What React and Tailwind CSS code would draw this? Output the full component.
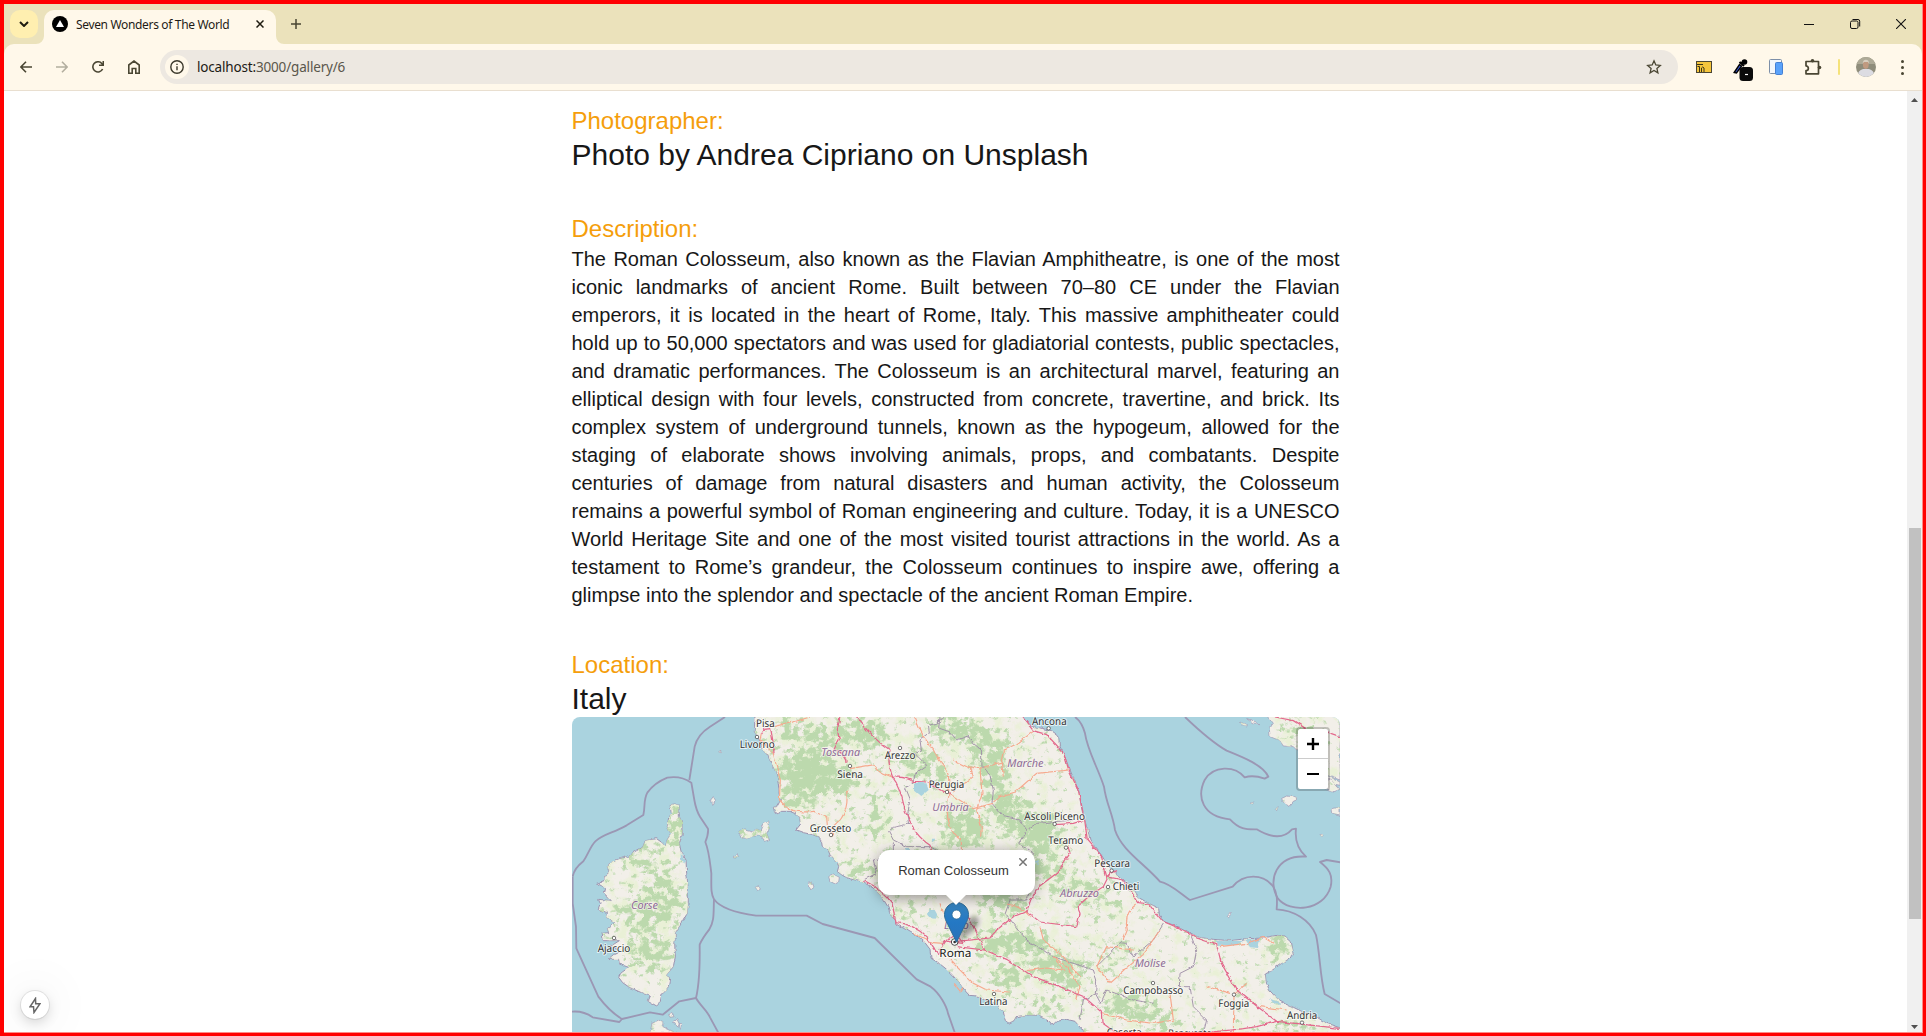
import React from "react";

const MAINLAND =
  "M585 45 L583 95 597 118 605 140 625 170 634 190 645 210 652 232 655 250 657 280 662 300 652 318 640 322 644 338 654 345 660 334 690 334 708 342 719 356 722 372 708 390 730 398 750 402 775 412 785 425 787 438 805 452 812 470 832 486 836 500 832 515 850 528 872 537 905 544 940 564 965 590 985 622 990 645 1005 655 1008 672 1040 690 1080 714 1095 728 1110 748 1113 775 1135 788 1160 808 1180 828 1202 852 1215 872 1228 886 1250 888 1285 903 1312 918 1330 935 1336 962 1346 970 1362 962 1368 950 1400 945 1432 946 1460 960 1482 974 1492 964 1520 958 1545 964 1562 984 1572 1000 2345 1000 2345 985 2300 970 2265 948 2225 934 2180 912 2150 895 2128 870 2118 845 2116 822 2135 812 2165 790 2190 775 2200 758 2194 725 2175 708 2150 706 2110 714 2060 716 2010 722 1960 718 1915 712 1890 698 1865 684 1812 665 1798 645 1796 624 1770 612 1738 594 1722 570 1700 548 1672 524 1655 508 1640 490 1622 462 1604 440 1590 420 1582 385 1570 350 1562 310 1558 280 1545 245 1528 205 1512 165 1498 135 1496 108 1475 92 1440 84 1410 78 1382 45 Z";
const CORSICA =
  "M330 314 L345 312 357 316 358 350 366 368 367 400 358 430 364 458 378 480 380 520 384 560 385 600 382 640 364 670 346 698 344 730 346 770 340 800 318 826 332 836 328 858 306 880 300 908 290 918 262 902 268 888 240 876 208 862 188 848 176 832 182 820 206 802 178 792 176 778 144 778 160 764 178 756 172 744 150 740 178 722 130 722 126 700 146 698 142 686 164 668 140 650 142 638 114 628 120 612 116 598 154 602 130 578 134 562 110 550 132 542 132 528 148 520 142 500 158 484 178 476 200 470 222 456 248 442 256 422 290 416 306 428 316 440 324 412 332 400 322 380 326 352 334 340 Z";
const ISLANDS = [
  "M536 395 L548 386 565 390 580 394 590 384 604 390 612 370 626 366 628 386 620 400 628 420 614 424 604 408 582 408 560 416 544 412 Z",
  "M452 300 L460 290 466 300 460 312 454 312 Z",
  "M806 530 L820 522 838 532 836 546 826 552 810 544 Z",
  "M745 548 L756 544 762 562 752 570 Z",
  "M520 470 L530 458 536 472 Z",
  "M586 562 L594 558 598 568 590 572 Z",
  "M276 970 L296 960 312 968 308 980 330 990 350 1000 270 1000 Z",
  "M338 966 L350 956 358 972 350 984 Z",
  "M326 944 L338 940 342 950 330 952 Z",
  "M358 970 L368 972 362 990 Z",
  "M476 156 L482 150 482 158 Z",
  "M2122 45 L2140 70 2128 85 2130 110 2160 122 2170 138 2200 140 2230 170 2260 210 2340 240 2340 45 Z",
  "M2060 56 L2080 62 2096 74 2082 72 Z",
  "M2042 66 L2058 72 2062 78 2046 74 Z",
  "M2164 296 L2180 288 2198 290 2214 298 2200 304 2190 316 2176 310 Z",
  "M2146 328 L2154 320 2150 332 Z",
  "M2070 310 L2082 306 2078 312 Z",
  "M2268 216 L2300 226 2340 246 2340 256 2300 248 2270 224 Z",
  "M2280 250 L2310 236 2340 268 2320 276 2290 266 Z",
  "M2316 326 L2340 322 2340 346 2318 340 Z",
  "M2280 404 L2292 402 2286 410 Z",
  "M2002 646 L2012 636 2016 640 2006 650 Z",
];
const BORDERS = [
  "M495 51 L450 80 Q412 104 404 140 Q398 178 388 240",
  "M38 530 Q42 506 70 484 C84 464 90 440 106 424 C130 402 158 400 200 376 L250 345 C256 320 250 300 262 278 Q284 248 322 233 Q362 226 394 248 L403 300 Q408 330 420 350 L444 386 Q446 402 436 426 C448 456 450 490 454 520 C454 560 452 580 462 598 C478 620 520 638 588 647 L740 647 788 672 944 714 1070 838 1112 860 C1140 880 1160 920 1164 940 L1185 1000",
  "M462 598 C460 640 464 660 448 688 Q426 716 419 734 C420 800 416 860 408 894",
  "M38 530 V610 L48 680 49 745 115 890 Q150 936 186 957 L270 937 308 944 358 904 408 894 C420 916 440 930 450 952 L476 1000",
  "M36 935 Q70 932 98 952 L178 966 186 957",
  "M1545 51 Q1566 66 1575 100 C1582 150 1612 200 1632 260 C1638 310 1658 340 1665 390 C1684 450 1752 490 1800 545 C1830 550 1860 580 1890 600 L2018 560 C2050 520 2110 520 2140 560 C2152 580 2152 600 2150 628 C2200 630 2250 660 2268 705 C2280 760 2280 830 2294 882 L2342 910",
  "M1875 51 C1920 94 1962 130 2000 152 C2050 172 2110 196 2125 230 L2114 236 Q2080 224 2054 232 C2024 196 1960 196 1934 240 C1910 290 1926 350 2010 358 C2040 390 2060 388 2090 388 C2130 412 2170 418 2196 388 L2208 386 C2204 420 2216 450 2238 470 C2150 464 2120 540 2154 596 C2190 640 2290 634 2312 560 C2320 524 2306 506 2280 486 L2300 480 2342 487",
];
const FORESTS = [
  [700, 90, 55, 40, 0.6], [740, 215, 85, 60, 0.9], [720, 300, 60, 34, 0.7], [835, 240, 60, 50, 0.7], [900, 90, 80, 35, 0.75],
  [800, 120, 60, 50, 0.6], [935, 110, 50, 50, 0.6], [940, 375, 40, 40, 0.6], [1080, 190, 60, 50, 0.6], [960, 300, 50, 40, 0.3],
  [1190, 90, 90, 40, 0.7], [1290, 165, 60, 75, 0.7], [1130, 220, 60, 30, 0.5], [1215, 385, 70, 50, 0.8], [1310, 270, 40, 80, 0.6],
  [1360, 345, 60, 60, 0.75], [1440, 400, 60, 60, 0.9], [1200, 480, 150, 60, 0.3], [1330, 600, 70, 50, 0.65], [1360, 730, 120, 35, 0.85],
  [1490, 800, 90, 40, 0.7], [1530, 560, 80, 45, 0.45], [1460, 500, 60, 40, 0.6], [1620, 600, 70, 50, 0.35], [1660, 760, 70, 60, 0.3],
  [1700, 920, 80, 40, 0.7], [1800, 960, 60, 30, 0.6], [2150, 742, 38, 26, 1], [2200, 985, 70, 16, 0.8], [1340, 830, 60, 35, 0.7],
  [1530, 850, 40, 30, 0.7], [900, 510, 50, 26, 0.6], [1160, 700, 50, 30, 0.3], [1040, 640, 60, 40, 0.3], [1450, 920, 60, 25, 0.6],
  [260, 480, 70, 50, 0.45], [310, 600, 60, 80, 0.6], [230, 640, 80, 60, 0.5], [270, 760, 70, 60, 0.6], [350, 380, 30, 70, 0.6],
  [585, 395, 50, 25, 0.5], [2230, 100, 70, 50, 0.35], [620, 130, 30, 40, 0.4],
];
const MOTORWAYS = [
  "M890 51 C915 80 930 110 990 150 C982 180 990 210 998 232 C1024 262 1030 310 1036 336 C1060 380 1060 400 1110 436 L1116 456",
  "M998 232 Q1030 228 1060 244 L1100 246 1125 262 1175 282",
  "M840 51 L832 90 838 118 822 148 Q860 160 858 190",
  "M604 100 L612 88 632 86 640 130 642 160",
  "M910 540 Q970 570 996 610 L1008 668 Q1060 670 1100 712 L1136 764",
  "M1136 764 Q1150 720 1186 700 L1210 730 1160 724",
  "M1190 724 L1290 714 1310 690 1360 650 1400 634 1440 666 1550 680 1560 640 1552 620 1590 586 1630 560 1650 520 1668 512",
  "M1190 600 L1230 660 1274 750 1190 740",
  "M1274 750 L1340 778 1420 830 1500 860 1572 890 1624 936 1626 968 1670 1000",
  "M1382 45 L1420 92 1460 104 1512 160 1526 210 1555 270 1574 360 1582 420 1624 468 1640 530 1690 540 1736 608 1766 612 1808 664 1870 690 1910 714 1970 734 1984 790 2030 870 2090 918 2150 964 2340 985",
  "M2150 964 L2090 980 2050 986 1920 1000",
  "M1400 634 L1412 600 1436 560 1490 520 1530 460 1524 440",
  "M1488 374 L1540 370 1574 360",
  "M2145 51 L2200 62 2260 100 2300 96 2340 110",
];
const TRUNKS = [
  "M640 80 L700 66 750 51", "M604 100 L600 120 640 160 650 200 661 240 658 300 680 322",
  "M680 322 Q700 340 760 334 L800 352 802 372", "M812 410 L820 400 808 390 Q870 350 860 272",
  "M870 206 L940 194 960 216 998 232", "M1064 51 Q1090 120 1120 146 C1140 200 1170 200 1166 250 L1166 290 C1150 360 1180 410 1204 420 V450",
  "M1166 280 L1240 326 1300 310 1320 290 1366 276 1430 220 1526 210", "M1180 276 L1240 230 1230 200 1256 206 1324 186 1330 150 1370 132 1420 94",
  "M1180 180 L1240 210 M1260 206 L1266 280 1250 330 1264 380 1262 410", "M1324 186 L1330 230",
  "M1340 612 C1400 620 1420 670 1400 634 M1730 612 Q1690 640 1702 690 L1690 720",
  "M1170 780 L1240 850 1280 870 1346 876 M1400 812 L1460 804 1510 810 1480 770 1520 800 1560 860 1550 900",
  "M1440 680 L1450 720 1510 770 1560 830", "M1624 940 L1700 960 1780 970 1840 960 1830 880",
  "M2022 884 L2060 850 M2022 884 L2020 1000 M1940 860 L2010 880", "M1800 690 L1750 760 1650 850 1610 800 1640 740 1720 750",
  "M1060 700 L1120 728 1150 730 M1140 610 L1150 640", "M1180 850 L1200 876 1210 860",
  "M1980 740 L2060 730 2110 712 2140 730 M2100 920 L2180 930",
];
const REGIONS = [
  "M1150 51 L1130 70 1105 76 1108 100 1080 120 1084 150 1064 160 1100 196 1066 220 1060 246 1036 262 1050 296 1042 350 1046 372 1000 382 986 394 1000 420 1040 440 1110 440 1140 456",
  "M1140 51 L1136 84 1170 96 1190 120 1224 108 1240 130 1264 150 1266 196 1290 226 1300 270 1296 310 1330 350 1380 360 1400 390 1430 370 1540 360",
  "M1000 430 L1000 450 960 476 940 480 950 520 910 540",
  "M1400 390 L1376 430 1420 460 1400 540 1410 570 1400 600 1350 600 1336 640 1360 670 1400 720 1480 770 1600 810 1610 840 1606 880 1622 910 1640 870 1720 900 1780 910",
  "M1810 672 L1780 720 1720 770 1700 730 1680 728 1650 760 1610 800",
  "M1890 700 L1910 750 1900 800 1860 820 1858 860 1890 860 1900 920 1940 960 1930 1000",
  "M1610 880 L1570 900 1560 960",
];
const LAKES = [
  "M1062 248 L1098 250 1106 270 1084 288 1062 270 Z", "M1106 630 L1124 630 1132 644 1124 656 1108 654 1102 640 Z",
  "M1968 724 L2050 722 2030 734 1974 738 Z", "M2056 720 L2100 716 2094 744 2070 742 Z",
  "M1030 448 L1050 446 1050 458 Z", "M1115 416 L1126 416 1118 430 Z", "M1420 486 L1436 480 1436 496 Z", "M2130 896 L2170 912 2140 910 Z",
  "M362 460 L378 484 372 490 362 476 Z",
];
const CITIES = [
  ["Pisa", 588, 81, 56, 0, 0], ["Livorno", 539, 144, 105, 591, 111], ["Siena", 832, 233, 77, 870, 198], ["Arezzo", 974, 176, 92, 1020, 144],
  ["Perugia", 1106, 263, 107, 1161, 276], ["Grosseto", 749, 395, 125, 813, 405], ["Ajaccio", 113, 755, 98, 162, 714],
  ["Ancona", 1416, 74, 104, 1466, 85], ["Ascoli Piceno", 1393, 359, 182, 1484, 372], ["Teramo", 1465, 431, 105, 1518, 443],
  ["Pescara", 1603, 502, 107, 1655, 512], ["Chieti", 1658, 571, 80, 1644, 561], ["Latina", 1258, 915, 84, 1302, 882],
  ["Campobasso", 1690, 883, 180, 1779, 849], ["Foggia", 1975, 920, 93, 2022, 884], ["Andria", 2181, 957, 91, 2226, 968],
  ["Caserta", 1640, 1007, 105, 0, 0], ["Benevento", 1825, 1010, 130, 0, 0],
];
const REGION_NAMES = [
  ["Toscana", 784, 167, 116], ["Corse", 213, 628, 81], ["Umbria", 1117, 332, 109], ["Marche", 1342, 202, 108],
  ["Abruzzo", 1500, 591, 117], ["Molise", 1724, 801, 93], ["Lazio", 1152, 688, 74],
];

function ItalyMap() {
  return (
    <svg viewBox="36 51 2304 945" className="block h-[315px] w-[768px]" fontFamily='"Noto Sans", sans-serif' textRendering="geometricPrecision">
      <defs>
        <clipPath id="land">
          <path d={MAINLAND} />
          <path d={CORSICA} />
          {ISLANDS.map((d) => <path key={d} d={d} />)}
        </clipPath>
        <filter id="woods" filterUnits="userSpaceOnUse" x="36" y="45" width="2304" height="960" colorInterpolationFilters="sRGB">
          <feGaussianBlur in="SourceGraphic" stdDeviation="16" result="density" />
          <feTurbulence type="fractalNoise" baseFrequency="0.045 0.05" numOctaves="4" seed="7" result="noise" />
          <feComposite in="density" in2="noise" operator="arithmetic" k2="0.46" k3="1" result="sum" />
          <feComponentTransfer in="sum" result="cut">
            <feFuncA type="linear" slope="6.5" intercept="-4.2" />
          </feComponentTransfer>
          <feFlood floodColor="#bcd9ad" />
          <feComposite operator="in" in2="cut" />
        </filter>
        <filter id="meadow" filterUnits="userSpaceOnUse" x="36" y="45" width="2304" height="960" colorInterpolationFilters="sRGB">
          <feGaussianBlur in="SourceGraphic" stdDeviation="34" result="density" />
          <feTurbulence type="fractalNoise" baseFrequency="0.03" numOctaves="5" seed="23" result="noise" />
          <feComposite in="density" in2="noise" operator="arithmetic" k2="0.4" k3="1" result="sum" />
          <feComponentTransfer in="sum" result="cut">
            <feFuncA type="linear" slope="4" intercept="-2.1" />
          </feComponentTransfer>
          <feFlood floodColor="#e9f0d6" />
          <feComposite operator="in" in2="cut" />
        </filter>
        <filter id="rough" filterUnits="userSpaceOnUse" x="0" y="0" width="2400" height="1050">
          <feTurbulence type="fractalNoise" baseFrequency="0.05" numOctaves="3" seed="4" />
          <feDisplacementMap in="SourceGraphic" scale="11" xChannelSelector="R" yChannelSelector="G" />
        </filter>
      </defs>
      <rect x="36" y="51" width="2304" height="950" fill="#aad3df" />
      <g filter="url(#rough)">
        <g fill="#f2efe9" stroke="#9c93b0" strokeWidth="3">
          <path d={MAINLAND} />
          <path d={CORSICA} />
          {ISLANDS.map((d) => <path key={d} d={d} strokeWidth="2" />)}
        </g>
        <g clipPath="url(#land)">
          {["url(#meadow)", "url(#woods)"].map((f) => (
            <g key={f} filter={f}>
              {FORESTS.map(([x, y, rx, ry, o]) => (
                <ellipse key={x + "-" + y} cx={x} cy={y} rx={rx} ry={ry} fillOpacity={o} />
              ))}
            </g>
          ))}
        </g>
        <g fill="#aad3df">{LAKES.map((d) => <path key={d} d={d} />)}</g>
        <g fill="none" stroke="#9f8fa8" strokeWidth="2.8">{REGIONS.map((d) => <path key={d} d={d} />)}</g>
        <g fill="none" stroke="#f6a88d" strokeWidth="3.4">{TRUNKS.map((d) => <path key={d} d={d} />)}</g>
        <g fill="none" stroke="#e3688c" strokeWidth="3.7">{MOTORWAYS.map((d) => <path key={d} d={d} />)}</g>
      </g>
      <g fill="none" stroke="#9b97b4" strokeWidth="5.5" strokeLinejoin="round">{BORDERS.map((d) => <path key={d} d={d} />)}</g>
      <g fill="#8d6b96" stroke="#f7f4ee" strokeWidth="5" strokeOpacity="0.75" paintOrder="stroke" fontSize="33" fontStyle="italic">
        {REGION_NAMES.map(([n, x, y, w]) => <text key={n} x={x} y={y} textLength={w} lengthAdjust="spacingAndGlyphs">{n}</text>)}
      </g>
      {CITIES.map(([n, x, y, w, cx, cy]) => (
        <g key={n}>
          {cx > 0 && <circle cx={cx} cy={cy} r="5.2" fill="#fff" stroke="#444" strokeWidth="2.2" />}
          <text x={x} y={y} textLength={w} lengthAdjust="spacingAndGlyphs" fontSize="32" fill="#333" stroke="#fff" strokeWidth="6" strokeOpacity="0.7" strokeLinejoin="round" paintOrder="stroke">{n}</text>
        </g>
      ))}
      <circle cx="1184" cy="726" r="10" fill="#fff" stroke="#333" strokeWidth="2.6" />
      <circle cx="1184" cy="726" r="4" fill="#333" />
      <text x="1138" y="771" textLength="96" lengthAdjust="spacingAndGlyphs" fontSize="34" fill="#222" stroke="#fff" strokeWidth="6" strokeOpacity="0.7" paintOrder="stroke">Roma</text>
    </svg>
  );
}

function Marker() {
  return (
    <svg viewBox="0 0 25 41" className="absolute left-[372px] top-[185px] h-[41px] w-[25px] overflow-visible">
      <defs>
        <linearGradient id="pin" x1="0" y1="0" x2="0" y2="1">
          <stop offset="0" stopColor="#3784bd" />
          <stop offset="0.5" stopColor="#2478c4" />
          <stop offset="1" stopColor="#2a72b8" />
        </linearGradient>
        <filter id="soft" x="-50%" y="-50%" width="200%" height="200%"><feGaussianBlur stdDeviation="2.4" /></filter>
      </defs>
      <path d="M13 40 L20 20 Q34 8 35 20 Q34 28 13 40Z" fill="#000" opacity="0.35" filter="url(#soft)" />
      <path d="M12.5 .5 C5.8 .5 .5 5.8 .5 12.6 C.5 16.4 2 19 3.8 22.4 L12.5 40.2 L21.2 22.4 C23 19 24.5 16.4 24.5 12.6 C24.5 5.8 19.2 .5 12.5 .5Z" fill="url(#pin)" stroke="#2e6c97" strokeWidth="1" />
      <circle cx="12.5" cy="12.6" r="4.5" fill="#fff" stroke="#2e6c97" strokeWidth="0.8" />
    </svg>
  );
}

function TabStrip() {
  return (
    <div className="flex h-10 shrink-0 items-end bg-[#ebe2bb]">
      <div className="mb-1.5 ml-1.5 flex size-7 items-center justify-center rounded-[10px] bg-[#ffefb0]">
        <svg viewBox="0 0 10 6" className="h-1.5 w-2.5" fill="none" stroke="#1e1b10" strokeWidth="2"><path d="M1 1l4 4 4-4" /></svg>
      </div>
      <svg viewBox="0 0 8 8" className="-ml-0.5 size-2"><path d="M8 0v8H0a8 8 0 008-8z" fill="#fff8ea" /></svg>
      <div className="flex h-[34px] w-[232px] items-center rounded-t-[10px] bg-[#fff8ea] pb-1.5 pl-2">
        <svg viewBox="0 0 16 16" className="size-4"><circle cx="8" cy="8" r="8" fill="#000" /><path d="M8 4l4 7H4z" fill="#fff" /></svg>
        <span className="ml-2 w-[154px] whitespace-nowrap pt-px font-['Noto_Sans',sans-serif] text-[12px] tracking-[-0.34px] text-[#1e1b16]">Seven Wonders of The World</span>
        <svg viewBox="0 0 8 8" className="ml-[26px] size-2" stroke="#1e1b10" strokeWidth="1.5"><path d="M.5 .5l7 7M7.5 .5l-7 7" /></svg>
      </div>
      <svg viewBox="0 0 8 8" className="size-2"><path d="M0 0v8h8a8 8 0 01-8-8z" fill="#fff8ea" /></svg>
      <svg viewBox="0 0 10 10" className="mb-[15px] ml-[7px] size-2.5" stroke="#4a4633" strokeWidth="1.5"><path d="M5 0v10M0 5h10" /></svg>
      <div className="mb-[15px] ml-auto mr-[16px] flex h-2.5 items-center gap-[36px]">
        <svg viewBox="0 0 10 10" className="size-2.5" stroke="#111" strokeWidth="1"><path d="M0 5.5h10" /></svg>
        <svg viewBox="0 0 10 10" className="size-2.5 overflow-visible" stroke="#111" strokeWidth="1" fill="none"><rect x=".5" y="2" width="7.5" height="7.5" rx="1.5" /><path d="M2.5 .5H8a1.700 1.700 0 011.700 1.700V7.500" /></svg>
        <svg viewBox="0 0 10 10" className="size-2.5" stroke="#111" strokeWidth="1.1"><path d="M0 0l10 10M10 0L0 10" /></svg>
      </div>
    </div>
  );
}

function Toolbar() {
  return (
    <div className="shrink-0 bg-[#ebe2bb]">
      <div className="flex h-[47px] items-center rounded-t-[10px] border-b border-[#e9dfd0] bg-[#fff8ea] pl-4 pr-[18px]">
        <div className="flex items-center gap-6">
          <svg viewBox="0 0 12 12" className="size-3" fill="none" stroke="#4a4633" strokeWidth="1.6"><path d="M12 6H1M6 .8L.9 6 6 11.200" /></svg>
          <svg viewBox="0 0 12 12" className="size-3" fill="none" stroke="#b3ae9f" strokeWidth="1.6"><path d="M0 6h11M6 .8L11.100 6 6 11.200" /></svg>
          <svg viewBox="0 0 12 12" className="size-3" fill="none" stroke="#4a4633" strokeWidth="1.6"><path d="M10.600 8A5.100 5.100 0 119.800 2.500L11 3.800M11.300 0v4.200H7" /></svg>
          <svg viewBox="0 0 12 14" className="h-3.5 w-3" fill="none" stroke="#4a4633" strokeWidth="1.6"><path d="M.8 5L6 1l5.200 4v8.200H7.800V8.500H4.200v4.700H.8z" /></svg>
        </div>
        <div className="ml-5 flex h-[34px] w-[1518px] items-center rounded-full bg-[#ede8e1] pl-[5px] pr-4">
          <div className="flex size-6 items-center justify-center rounded-full bg-[#fff8ea]">
            <svg viewBox="0 0 14 14" className="size-3.5" fill="none" stroke="#3b382b" strokeWidth="1.4"><circle cx="7" cy="7" r="6.2" /><path d="M7 6.300v4M7 3.700v1.300" /></svg>
          </div>
          <span className="ml-2 whitespace-nowrap font-['Noto_Sans',sans-serif] text-[13.5px] tracking-[-0.17px] text-[#5a564b]"><span className="text-[#1e1b16]">localhost:</span>3000/gallery/6</span>
          <svg viewBox="0 0 16 16" className="ml-auto size-4" fill="none" stroke="#4a4633" strokeWidth="1.3"><path d="M8 1.800l1.800 4.200 4.500.4-3.400 3 1 4.400L8 11.500l-3.900 2.300 1-4.400-3.400-3 4.500-.4z" /></svg>
        </div>
        <svg viewBox="0 0 16 12" className="ml-[18px] h-3 w-4"><rect x=".5" y=".5" width="15" height="11" fill="#f5c53c" stroke="#4b4634" /><path d="M1 3.500h6M1.500 5.500h2V11M5.500 11V7q1-2 2.500 0v4" fill="none" stroke="#3b3418" /></svg>
        <svg viewBox="0 0 20 22" className="ml-[21px] mt-1.5 h-[22px] w-5"><path d="M1.200 13.500L6.500 5.500l2 1.600L3.500 14z" fill="#3b5bdb" stroke="#000" strokeWidth="1.400" /><path d="M6.500 3l4.500 4M8 4l3-1" stroke="#000" strokeWidth="2" /><circle cx="11.500" cy="3" r="2.800" fill="#000" /><rect x="6.500" y="8" width="13.500" height="14" rx="3.500" fill="#0b0b0b" /><path d="M12 15.500h3" stroke="#fff" strokeWidth="1.200" /></svg>
        <svg viewBox="0 0 14 16" className="ml-4 h-4 w-3.5"><rect x=".5" y=".5" width="12" height="14" rx="1" fill="#f4f7fb" stroke="#7d8fa8" /><rect x="6.500" y="3.500" width="7" height="12" rx="1" fill="#5aa2fa" stroke="#4580d4" /></svg>
        <svg viewBox="0 0 17 16" className="ml-[22px] h-4 w-[17px]"><path d="M1 2.500h12.500v12.300H1v-3.300a2.300 2.300 0 000-4.700z" fill="none" stroke="#4a4633" strokeWidth="1.700" strokeLinejoin="round" /><circle cx="7.500" cy="1.800" r="1.800" fill="#4a4633" /><circle cx="14.500" cy="8.500" r="1.800" fill="#4a4633" /></svg>
        <div className="ml-4 h-4 w-0.5 rounded bg-[#f5e27a]" />
        <svg viewBox="0 0 20 20" className="ml-4 size-5">
          <defs><clipPath id="face"><circle cx="10" cy="10" r="10" /></clipPath></defs>
          <g clipPath="url(#face)"><rect width="20" height="20" fill="#8f8d7b" /><rect width="20" height="7" fill="#aeaa97" /><path d="M1 20q1-7 6-8h6q5 1 6 8z" fill="#dcdce2" /><ellipse cx="9.800" cy="7.500" rx="2.900" ry="4.400" fill="#c09a80" /><path d="M6.700 6.500a3.200 3.800 0 016.400 0l-1.200-1.600H8z" fill="#d7cfc0" /></g>
        </svg>
        <div className="ml-auto flex flex-col gap-[3px]">
          <i className="size-[3px] rounded-full bg-[#4a4633]" /><i className="size-[3px] rounded-full bg-[#4a4633]" /><i className="size-[3px] rounded-full bg-[#4a4633]" />
        </div>
      </div>
    </div>
  );
}

function Section({ title, children }) {
  return (
    <section>
      <h2 className="text-2xl text-[#f59e0b]">{title}</h2>
      {children}
    </section>
  );
}

export default function App() {
  return (
    <div className="h-[1036px] w-[1926px] overflow-hidden border-b-[3px] border-l-4 border-r-[3px] border-t-4 border-[#ff0000]">
      <div className="flex h-full flex-col overflow-hidden border-b border-r border-[#ff8a86]">
        <TabStrip />
        <Toolbar />
        <div className="flex min-h-0 flex-1 bg-white">
          <main className="relative flex-1 overflow-hidden">
            <div className="ml-[567.5px] flex w-[768px] flex-col gap-10 pt-3.5 font-['Liberation_Sans',Arial,sans-serif] text-[#171717]">
              <Section title="Photographer:">
                <p className="text-3xl">Photo by Andrea Cipriano on Unsplash</p>
              </Section>
              <Section title="Description:">
                <p className="text-justify text-xl">
                  The Roman Colosseum, also known as the Flavian Amphitheatre, is one of the most iconic landmarks of ancient Rome. Built between 70–80 CE under the Flavian emperors, it is located in the heart of Rome, Italy. This massive amphitheater could hold up to 50,000 spectators and was used for gladiatorial contests, public spectacles, and dramatic performances. The Colosseum is an architectural marvel, featuring an elliptical design with four levels, constructed from concrete, travertine, and brick. Its complex system of underground tunnels, known as the hypogeum, allowed for the staging of elaborate shows involving animals, props, and combatants. Despite centuries of damage from natural disasters and human activity, the Colosseum remains a powerful symbol of Roman engineering and culture. Today, it is a UNESCO World Heritage Site and one of the most visited tourist attractions in the world. As a testament to Rome’s grandeur, the Colosseum continues to inspire awe, offering a glimpse into the splendor and spectacle of the ancient Roman Empire.
                </p>
              </Section>
              <Section title="Location:">
                <p className="text-3xl">Italy</p>
                <div className="relative h-[315px] overflow-hidden rounded-t-lg">
                  <ItalyMap />
                  <Marker />
                  <div className="absolute left-[306px] top-[133px] flex h-[45px] w-[157px] items-center justify-center rounded-xl bg-white pb-[3px] pr-[5px] text-[13px] text-[#333] shadow-[0_3px_14px_rgba(0,0,0,0.4)]">
                    Roman Colosseum
                    <svg viewBox="0 0 8 8" className="absolute right-2 top-2 size-2" stroke="#757575" strokeWidth="1.5"><path d="M.3 .3l7.400 7.400M7.700 .3L.3 7.700" /></svg>
                  </div>
                  <svg viewBox="0 0 22 11" className="absolute left-[373px] top-[177px] h-[11px] w-[22px]"><path d="M0 0h22L11 11z" fill="#fff" /></svg>
                  <div className="absolute right-2.5 top-2.5 flex w-[34px] flex-col overflow-hidden rounded border-2 border-black/20 bg-white bg-clip-padding">
                    <div className="flex h-[30px] items-center justify-center border-b border-[#ccc]"><svg viewBox="0 0 12 12" className="size-3" stroke="#000" strokeWidth="2.4"><path d="M6 0v12M0 6h12" /></svg></div>
                    <div className="flex h-[30px] items-center justify-center"><svg viewBox="0 0 12 12" className="size-3" stroke="#000" strokeWidth="2.2"><path d="M0 6h12" /></svg></div>
                  </div>
                </div>
              </Section>
            </div>
            <div className="absolute bottom-[12.7px] left-[16.7px] flex size-[28.6px] items-center justify-center rounded-full bg-white shadow-[0_0_0_1px_rgba(0,0,0,0.08),0_4px_12px_rgba(0,0,0,0.15),0_0_50px_rgba(0,0,0,0.12)]">
              <svg viewBox="0 0 12 17" className="h-[17px] w-3" fill="none" stroke="#666" strokeWidth="1.5"><path d="M6.500 1.500L1 9.800h3.500L5 15.500l6-8.800H6.700z" /></svg>
            </div>
          </main>
          <div className="flex w-[15px] flex-col items-center bg-[#f0f0f0] py-[7px]">
            <svg viewBox="0 0 7 4" className="h-1 w-[7px]"><path d="M3.500 0L7 4H0z" fill="#505050" /></svg>
            <div className="mt-[426px] h-[391px] w-3 bg-[#c1c1c1]" />
            <svg viewBox="0 0 7 4" className="mb-[-4px] mt-auto h-1 w-[7px]"><path d="M3.500 4L7 0H0z" fill="#505050" /></svg>
          </div>
        </div>
      </div>
    </div>
  );
}
